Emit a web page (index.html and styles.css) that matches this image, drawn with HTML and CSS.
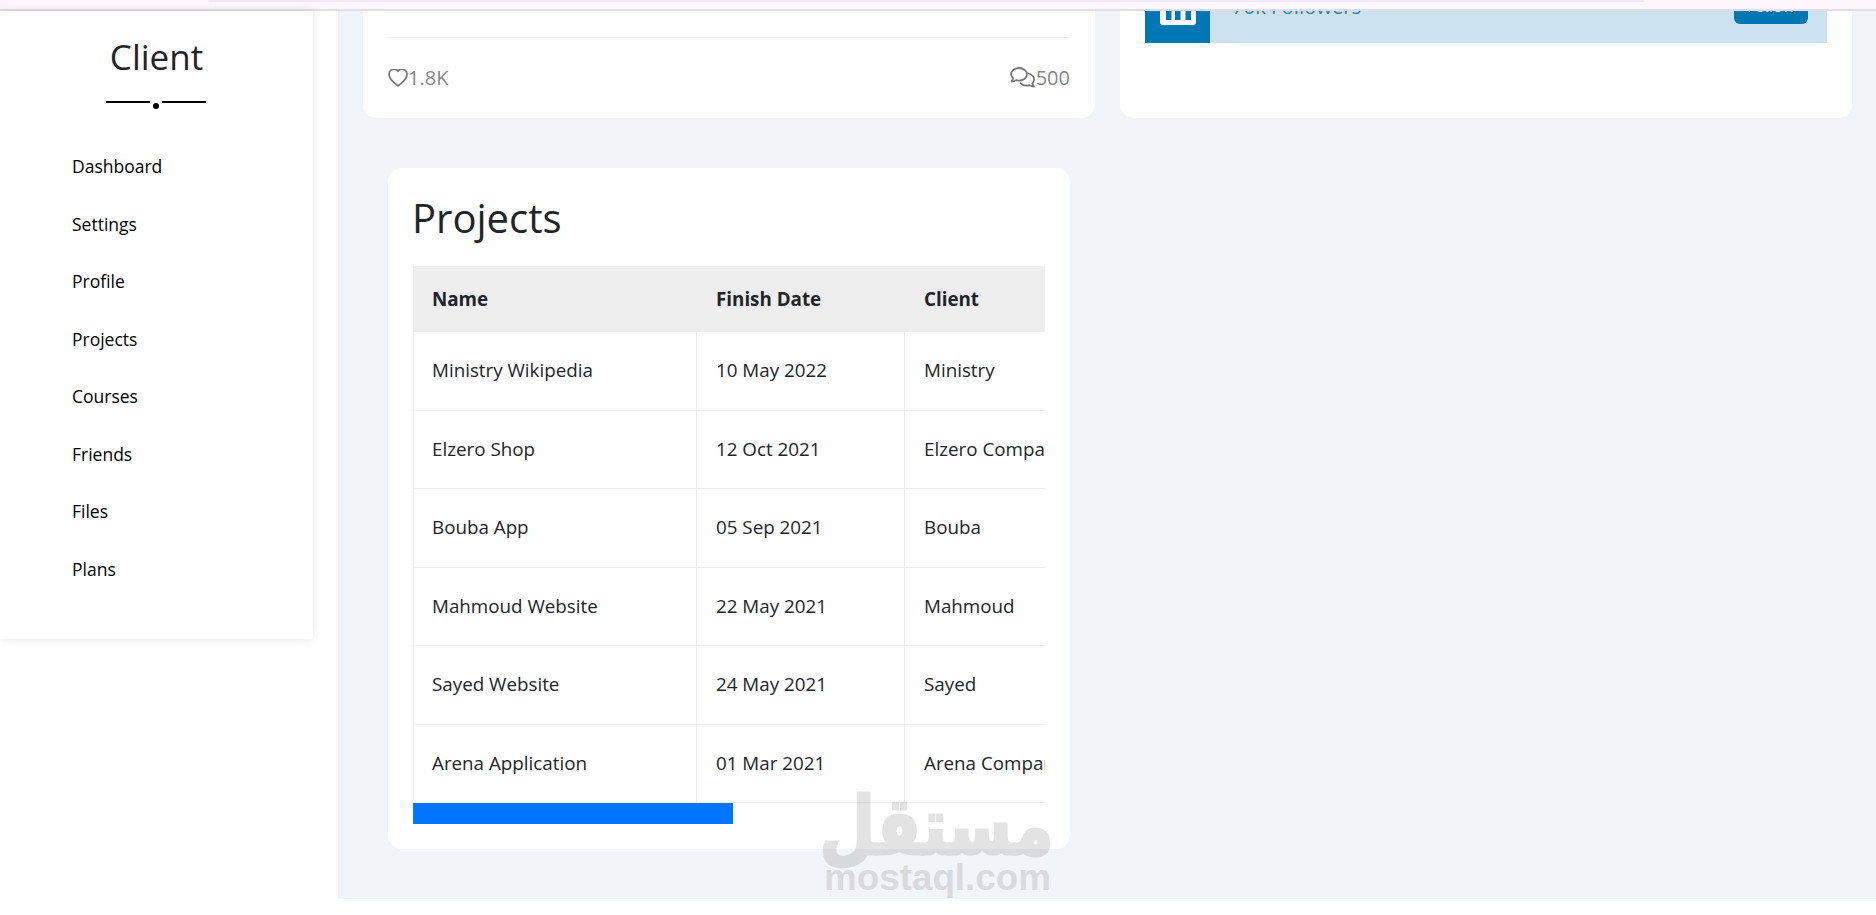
FILE: index.html
```html
<!DOCTYPE html>
<html lang="en">
<head>
<meta charset="utf-8">
<title>Client Dashboard</title>
<link rel="stylesheet" href="styles.css">
</head>
<body>
<div class="strip"><div class="strip-tab"></div></div>
<div class="page">
  <aside class="sidebar">
    <h3 class="brand">Client</h3>
    <div class="brand-rule"><span class="brand-line"></span><span class="brand-dot"></span><span class="brand-line"></span></div>
    <nav class="nav">
      <a class="nav-item">Dashboard</a>
      <a class="nav-item">Settings</a>
      <a class="nav-item">Profile</a>
      <a class="nav-item">Projects</a>
      <a class="nav-item">Courses</a>
      <a class="nav-item">Friends</a>
      <a class="nav-item">Files</a>
      <a class="nav-item">Plans</a>
    </nav>
  </aside>
  <main class="main">
    <div class="grid">
      <section class="card post">
        <div class="post-stats">
          <span class="stat">
            <svg class="icon-heart" viewBox="1 3 22 20" aria-hidden="true"><path d="M12 21.500S2 15.500 2 8.500A5.500 5.500 0 0 1 12 5.500a5.500 5.500 0 0 1 10 3c0 7-10 13-10 13z"/></svg>1.8K
          </span>
          <span class="stat">
            <svg class="icon-comments" viewBox="0 0 26 21" aria-hidden="true"><path d="M9 1c4.400 0 8 2.800 8 6.300s-3.600 6.300-8 6.300c-1 0-2-.1-3-.5-1.200.9-2.700 1.400-4.500 1.400.9-1 1.500-2.200 1.600-3.400C2 10 1 8.700 1 7.300 1 3.800 4.600 1 9 1z"/><path d="M19 6.500c3 1 5 3.300 5 6 0 1.500-.6 2.800-1.600 3.900.1 1.100.6 2.200 1.500 3.100-1.700 0-3.100-.4-4.300-1.300-1 .3-2 .5-3 .5-2.500 0-4.700-1-6.100-2.500"/></svg>500
          </span>
        </div>
      </section>
      <section class="card social">
        <div class="social-row">
          <div class="social-icon">
            <svg class="icon-linkedin" viewBox="0 0 36 36" aria-hidden="true"><rect width="36" height="36" rx="3" fill="#fff"/><rect x="6" y="14" width="5.500" height="17" fill="#0077b5"/><circle cx="8.700" cy="8.500" r="3.200" fill="#0077b5"/><path fill="#0077b5" d="M15 14h5.200v2.400c1-1.700 2.900-2.800 5-2.800 4.400 0 5.800 2.800 5.800 7V31h-5.500v-8.600c0-2-.4-3.900-2.700-3.900s-2.300 1.900-2.300 3.900V31H15z"/></svg>
          </div>
          <div class="social-text">70k Followers</div>
          <a class="social-btn">Follow</a>
        </div>
      </section>
      <section class="card projects">
        <h2 class="projects-title">Projects</h2>
        <div class="table-scroll">
          <table class="table">
            <colgroup><col class="col-name"><col class="col-date"><col class="col-client"></colgroup>
            <thead>
              <tr><th>Name</th><th>Finish Date</th><th>Client</th></tr>
            </thead>
            <tbody>
              <tr><td>Ministry Wikipedia</td><td>10 May 2022</td><td>Ministry</td></tr>
              <tr><td>Elzero Shop</td><td>12 Oct 2021</td><td>Elzero Company</td></tr>
              <tr><td>Bouba App</td><td>05 Sep 2021</td><td>Bouba</td></tr>
              <tr><td>Mahmoud Website</td><td>22 May 2021</td><td>Mahmoud</td></tr>
              <tr><td>Sayed Website</td><td>24 May 2021</td><td>Sayed</td></tr>
              <tr><td>Arena Application</td><td>01 Mar 2021</td><td>Arena Company</td></tr>
            </tbody>
          </table>
        </div>
        <div class="table-scrollbar"><div class="table-thumb"></div></div>
      </section>
    </div>
  </main>
</div>
<div class="watermark">
  <div class="watermark-ar" lang="ar" dir="rtl">مستقل</div>
  <div class="watermark-en">mostaql.com</div>
</div>
</body>
</html>
```
FILE: styles.css
```css
* { box-sizing: border-box; }
html, body { margin: 0; padding: 0; }
body {
  height: 915px;
  overflow: hidden;
  background: #fff;
  font-family: "Open Sans", sans-serif;
  font-size: 18px;
  color: #212529;
  position: relative;
}
.strip {
  height: 11px;
  background: #fdf7fd;
  border-bottom: 2px solid #e3dcea;
}
.strip-tab {
  height: 2px;
  margin: 0 232px 0 208px;
  background: #f0e8f5;
  border-bottom-left-radius: 2px;
}
.page { display: flex; align-items: flex-start; }

.sidebar {
  flex: 0 0 313px;
  background: #fff;
  box-shadow: 0 0 10px rgba(0, 0, 0, .1);
  padding: 24px 0 41px;
}
.brand {
  margin: 0;
  font-size: 35px;
  font-weight: 400;
  line-height: 44px;
  text-align: center;
}
.brand-rule {
  display: flex;
  justify-content: center;
  align-items: flex-start;
  height: 37px;
  margin-top: 22px;
  padding-right: 1px;
}
.brand-line { width: 44px; height: 2px; background: #000; }
.brand-dot {
  width: 6px;
  height: 6px;
  margin: 2px 3px 0;
  border-radius: 50%;
  background: #000;
}
.nav { display: flex; flex-direction: column; }
.nav-item {
  height: 57.500px;
  padding-left: 72px;
  font-size: 17.500px;
  line-height: 57.500px;
  color: #000;
}

.main {
  flex: 1;
  margin-left: 25px;
  background: #f1f4f9;
  padding: 0 24px 50px 25px;
}
.grid {
  display: grid;
  grid-template-columns: 732px 732px;
  column-gap: 25px;
  row-gap: 50px;
}
.card { background: #fff; }
.post {
  padding: 26px 25px 27px;
  border-radius: 0 0 14px 14px;
}
.post-stats {
  display: flex;
  justify-content: space-between;
  border-top: 1px solid #eee;
  padding-top: 26px;
  color: #888;
  font-size: 20px;
  line-height: 27px;
}
.stat { display: flex; align-items: center; }
.icon-heart, .icon-comments {
  fill: none;
  stroke: #777;
  stroke-width: 2;
  stroke-linejoin: round;
  stroke-linecap: round;
}
.icon-heart { width: 20px; height: 18px; }
.icon-comments { width: 26px; height: 21px; stroke-width: 1.800; }

.social {
  padding: 0 25px;
  border-radius: 0 0 14px 14px;
}
.social-row {
  display: flex;
  align-items: flex-end;
  height: 32px;
  overflow: hidden;
  background: #cce3ef;
}
.social-icon {
  flex: 0 0 65px;
  height: 73px;
  display: flex;
  align-items: center;
  justify-content: center;
  background: #0077b5;
}
.icon-linkedin { width: 36px; height: 36px; }
.social-text {
  flex: 1;
  padding: 0 0 25px 22px;
  font-size: 20.300px;
  line-height: 24px;
  color: #2a86bd;
}
.social-btn {
  flex: 0 0 74px;
  margin: 0 19px 19px 0;
  padding: 4px 0 7px;
  border-radius: 6px;
  background: #0077b5;
  color: #fff;
  font-size: 16px;
  line-height: 22px;
  text-align: center;
}

.projects {
  grid-column: 1;
  margin: 0 25px;
  padding: 25px;
  border-radius: 14px;
}
.projects-title {
  margin: 0 0 23px -1px;
  font-size: 40px;
  font-weight: 400;
  line-height: 50px;
}
.table-scroll { overflow: hidden; }
.table-scrollbar { height: 21px; background: #fff; }
.table-thumb { width: 320px; height: 100%; background: #0075ff; }
.table {
  table-layout: fixed;
  width: 1248px;
  border-collapse: collapse;
  font-size: 18.800px;
}
.col-name { width: 283px; }
.col-date { width: 208px; }
.col-client { width: 757px; }
.table th {
  height: 65px;
  padding: 0 19px 1px;
  border: 1px solid #eee;
  background: #eee;
  font-weight: 700;
  text-align: left;
}
.table td {
  height: 78.500px;
  padding: 0 19px 1px;
  border: 1px solid #eee;
  white-space: nowrap;
}
.table th:first-child, .table td:first-child { padding-left: 18px; }

.watermark {
  position: absolute;
  left: 824px;
  top: 785px;
  width: 225px;
  pointer-events: none;
  color: #5a5a5a;
  opacity: .16;
}
.watermark-ar {
  display: flex;
  justify-content: center;
  font-family: "DejaVu Sans", sans-serif;
  font-weight: 700;
  font-size: 80px;
  padding-top: 11px;
  line-height: 62px;
  height: 73px;
  white-space: nowrap;
  transform: scaleX(.8);
  -webkit-text-stroke: 3px #5a5a5a;
  paint-order: stroke fill;
}
.watermark-en {
  font-family: "Liberation Sans", sans-serif;
  font-weight: 700;
  font-size: 36.800px;
  line-height: 40px;
  white-space: nowrap;
  text-align: center;
}
```
